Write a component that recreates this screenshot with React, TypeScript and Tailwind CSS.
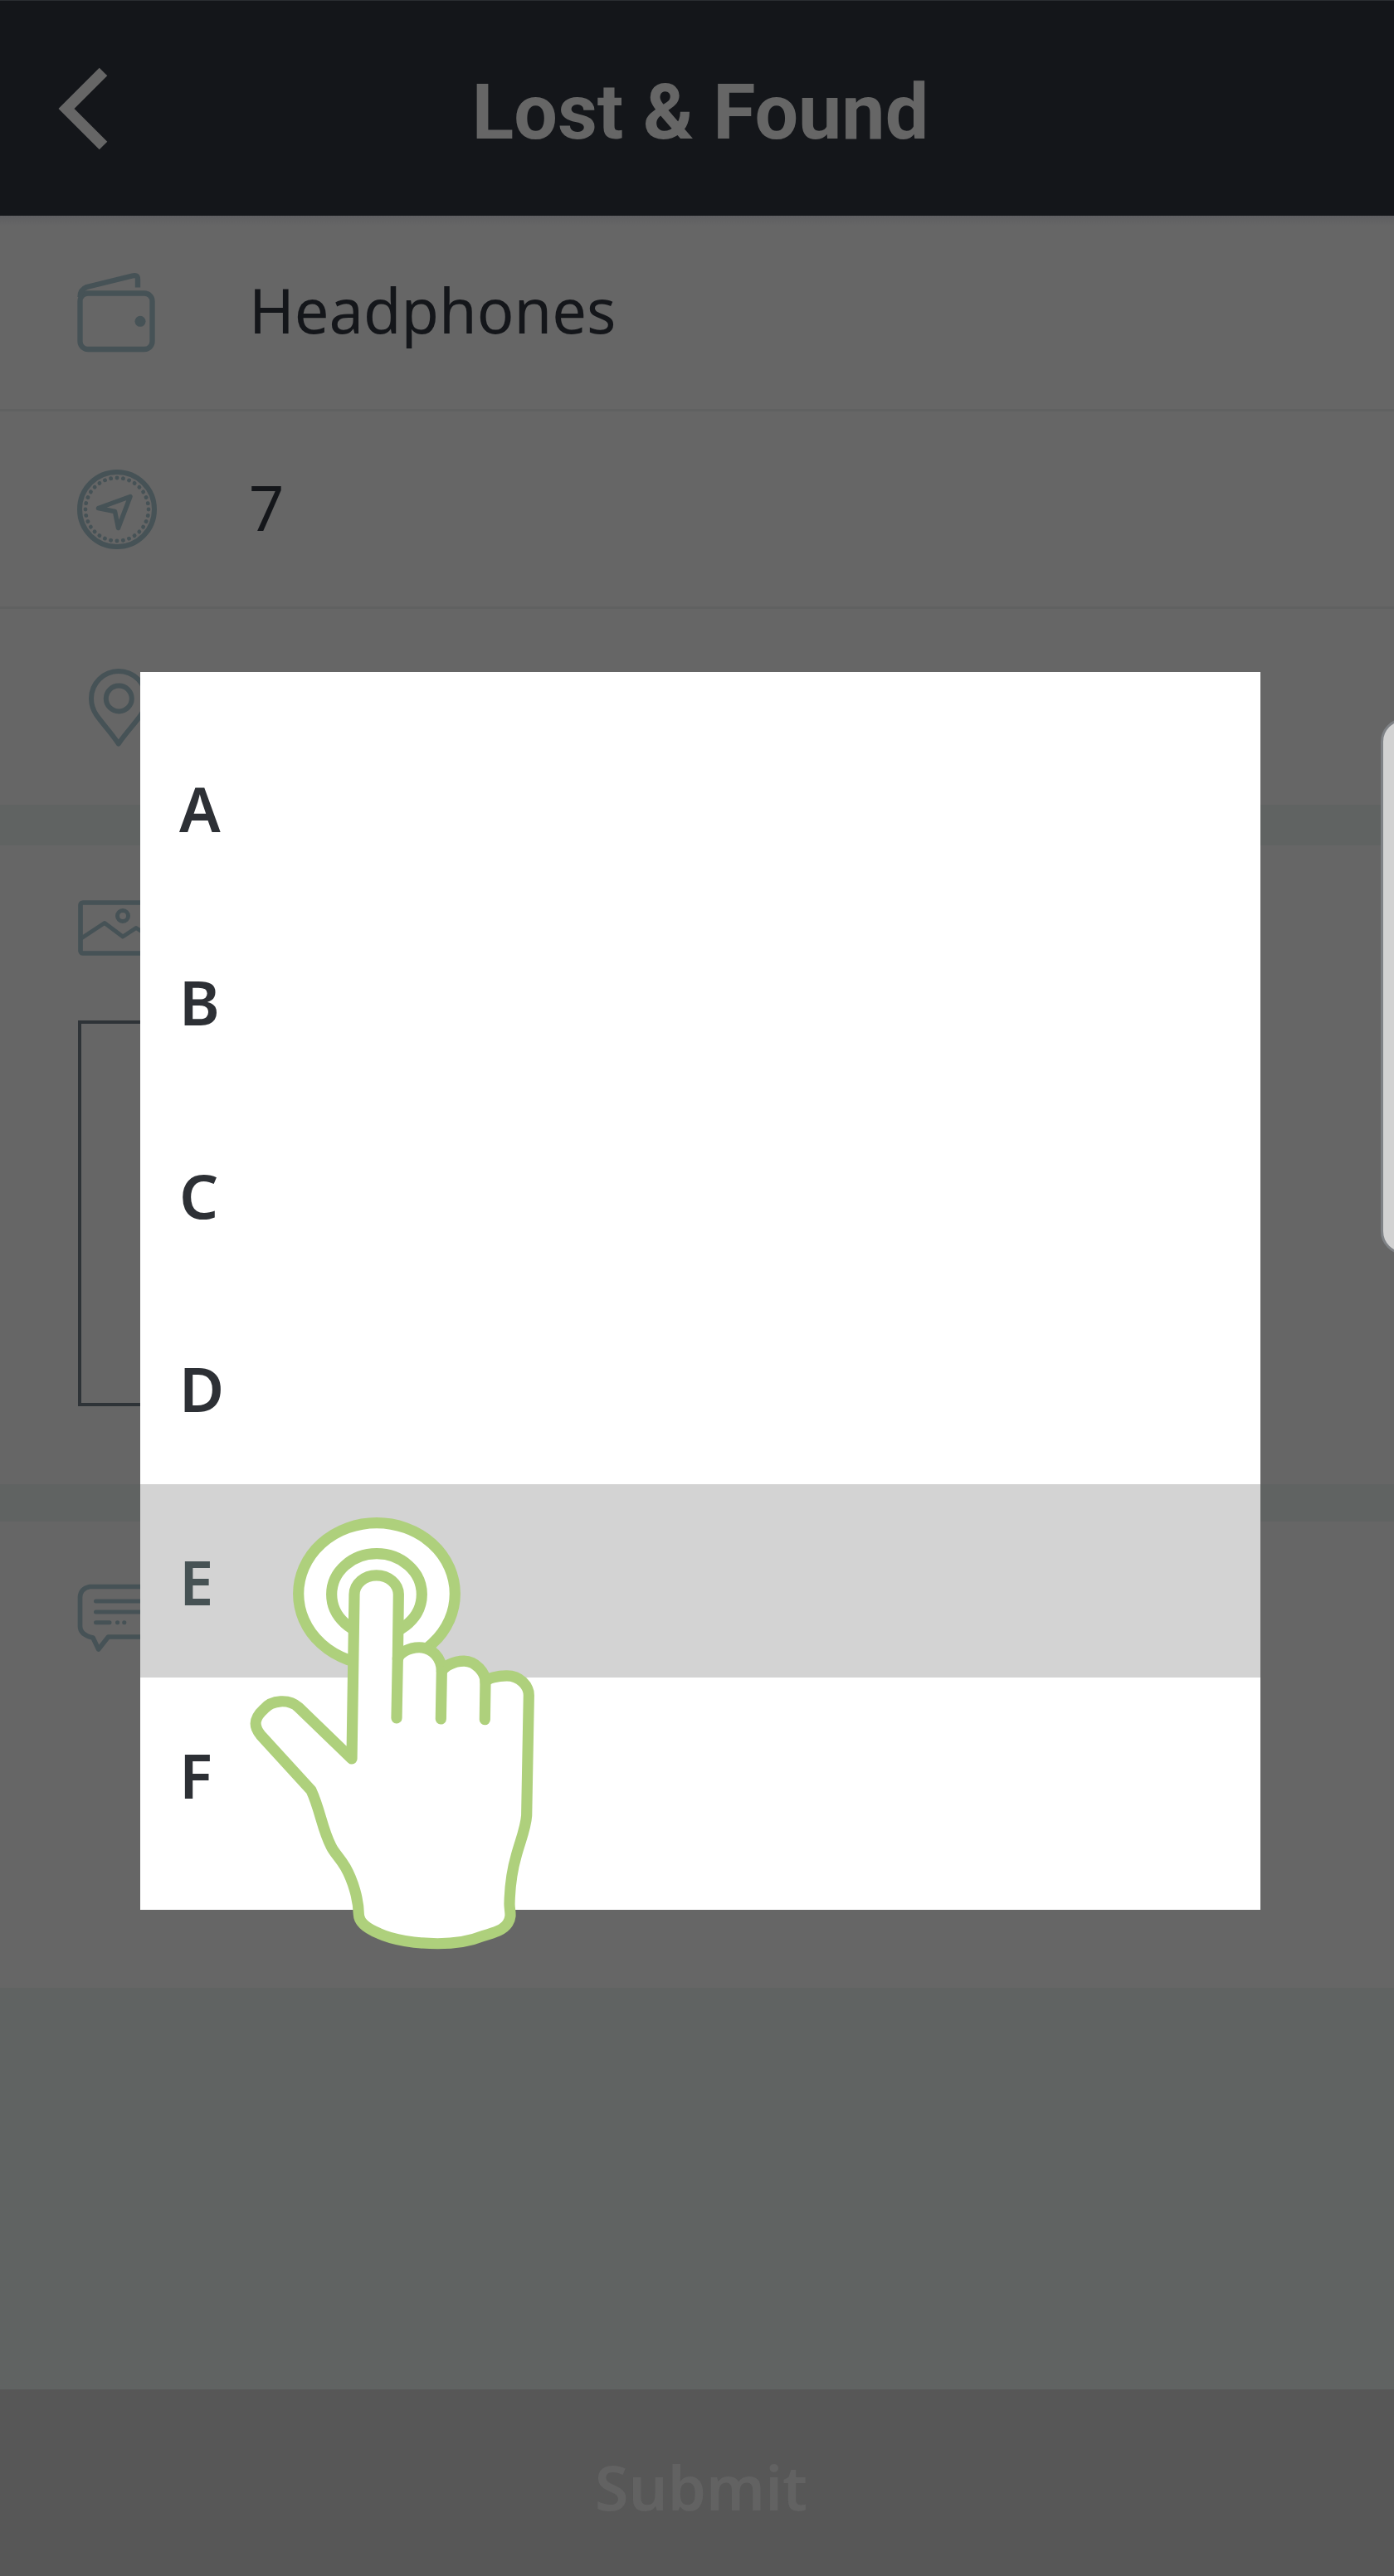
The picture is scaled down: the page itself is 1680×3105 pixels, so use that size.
import React from "react";

const ICON = "#465256";

function WalletIcon() {
  return (
    <svg className="mt-[8px] block h-[120px] w-[120px]" viewBox="80 320 120 120" fill="none" stroke={ICON} strokeWidth="6.300" strokeLinecap="round" strokeLinejoin="round">
      <rect x="96.500" y="353.500" width="87" height="67.500" rx="9.500" />
      <path d="M96.500 358c0-7 3-10 8-12l55-13.500c4-1 6.500 0 6.500 4v10" strokeLinecap="butt" />
      <circle cx="169" cy="387.300" r="6.500" fill={ICON} stroke="none" />
    </svg>
  );
}

function CompassIcon() {
  return (
    <svg className="block h-[120px] w-[120px]" viewBox="80 554 120 120" fill="none" stroke={ICON} strokeWidth="6" strokeLinejoin="round">
      <circle cx="141" cy="614" r="45" />
      <circle cx="141" cy="614" r="38" strokeWidth="4.800" strokeLinecap="round" pathLength="320" strokeDasharray="0.1 9.9" />
      <path d="M118.500 612.500 157 598.500 142.500 636.500 138.500 616.500Z" strokeWidth="5.500" />
    </svg>
  );
}

function PinIcon() {
  return (
    <svg className="mt-[5px] block h-[120px] w-[120px]" viewBox="80 792 120 120" fill="none" stroke={ICON} strokeWidth="6" strokeLinejoin="round">
      <path d="M142.800 894.500C134 881 124 871 116 859.500C111 852 110 847 110 840a33 33 0 0 1 66 0c0 7-1 12-6 19.500C162 871 152 881 142.800 894.500Z" />
      <circle cx="143.300" cy="840" r="15.500" />
    </svg>
  );
}

function ImageIcon() {
  return (
    <svg className="block h-[80px] w-[120px]" viewBox="80 1079 120 80" fill="none" stroke={ICON} strokeWidth="5.700" strokeLinejoin="round">
      <rect x="97" y="1088" width="90" height="61" rx="3" />
      <circle cx="148" cy="1104" r="6.500" strokeWidth="5" />
      <path d="M98 1131 126 1112.500 148 1129 164 1118.500 187 1133" strokeWidth="5" />
    </svg>
  );
}

function ChatIcon() {
  return (
    <svg className="block h-[90px] w-[120px]" viewBox="80 1906 120 90" fill="none" stroke={ICON} strokeWidth="5.700" strokeLinecap="round" strokeLinejoin="round">
      <path d="M108 1912.500H176q12 2 12 12V1962q-2 11-14 11H130.500L118.700 1988 112 1974C103 1972 96.500 1968 96.500 1960V1925Q97 1915 108 1912.500Z" />
      <path d="M115.500 1930H171M115.500 1943H171M115.500 1955.700H132M141.500 1955.700h.1M149.700 1955.700h.1" strokeWidth="5" />
    </svg>
  );
}

function TapHand() {
  return (
    <svg
      className="absolute left-[280px] top-[1800px] h-[570px] w-[400px]"
      viewBox="0 0 1200 1568"
      preserveAspectRatio="none"
      fill="#fff"
      stroke="#aed07c"
      strokeWidth="13.200"
      strokeLinecap="round"
      strokeLinejoin="round"
    >
      <ellipse cx="522" cy="333" rx="283" ry="235" vectorEffect="non-scaling-stroke" />
      <ellipse cx="522" cy="335" rx="163" ry="135" vectorEffect="non-scaling-stroke" />
      <path
        vectorEffect="non-scaling-stroke"
        d="M432 880L441 335C442 300 477 272 521 272C565 272 600 300 601 335L598 550C603 530 637 511 676 511C722 511 757 545 757 590C765 575 798 556 838 556C880 556 915 595 915 625C922 612 960 605 992 605C1040 605 1072 638 1072 670L1064 1068C1061 1110 1042 1150 1027 1200C1008 1260 1003 1310 1002 1362C1002 1385 1012 1402 996 1425C980 1448 950 1456 905 1468C860 1485 800 1493 742 1493C660 1493 580 1480 530 1459C490 1444 458 1425 457 1396C456 1345 436 1284 409 1240C387 1205 370 1195 357 1170C325 1115 318 1050 285 985L102 801C70 765 85 740 115 715C142 685 205 680 240 710Z"
      />
      <path d="M598 545L594 745M757 590L754 748M915 625L913 750" fill="none" vectorEffect="non-scaling-stroke" />
    </svg>
  );
}

function FieldRow({ icon, label }: { icon: React.ReactNode; label?: string }) {
  return (
    <div className="flex h-[238px] items-center border-b-[3px] border-[#606161] pl-[80px]">
      {icon}
      <span className="-mt-[3px] ml-[100px] text-[74px] leading-[100px] text-[#14161a]">{label}</span>
    </div>
  );
}

const options = ["A", "B", "C", "D", "E", "F"];

export default function App() {
  return (
    <div className="relative flex h-[3105px] w-[1680px] flex-col overflow-hidden bg-[#606362] font-['Noto_Sans','Open_Sans',sans-serif]">
      <header className="flex h-[260px] shrink-0 items-center border-t border-[#2a2d31] bg-[#14161a]">
        <svg className="ml-[66px] h-[104px] w-[70px]" viewBox="66 78 70 104" fill="none" stroke="#666" strokeWidth="13.500">
          <path d="M124.500 85.500 80 130 124.500 174.500" />
        </svg>
        <h1 className="w-[1416px] pt-[8px] text-center font-['Roboto',sans-serif] text-[93.3px] font-bold leading-[110px] text-[#666]">Lost &amp; Found</h1>
      </header>

      <section className="h-[710px] shrink-0 bg-[linear-gradient(#5e5e61,#666_12px)]">
        <div className="-mt-[2px]">
          <FieldRow icon={<WalletIcon />} label="Headphones" />
        </div>
        <FieldRow icon={<CompassIcon />} label="7" />
        <div className="flex h-[234px] items-center pl-[80px]">
          <PinIcon />
        </div>
      </section>

      <section className="mt-[49px] h-[770px] shrink-0 bg-[#666] pl-[80px] pt-[60px]">
        <ImageIcon />
        <div className="ml-[14px] mt-[71px] h-[465px] w-[465px] border-4 border-[#2e3337]" />
      </section>

      <section className="mt-[45px] h-[562px] shrink-0 bg-[#666] pl-[80px] pt-[72px]">
        <ChatIcon />
      </section>

      <button className="mt-auto flex h-[225px] shrink-0 items-center justify-center bg-[#575757] pl-[10px] pt-[9px] text-[74px] font-semibold text-[#626262]">
        Submit
      </button>

      <div className="absolute left-[169px] top-[810px] flex h-[1492px] w-[1350px] flex-col bg-white py-[47px]">
        {options.map((o) => (
          <div
            key={o}
            className={
              o === "E"
                ? "flex h-[233px] items-center bg-[#d3d3d3] pl-[47px] pt-[2px] text-[74px] font-semibold text-[#465254]"
                : "flex h-[233px] items-center pl-[47px] pt-[2px] text-[74px] font-semibold text-[#2d3035]"
            }
          >
            {o}
          </div>
        ))}
      </div>

      <div className="absolute left-[1664px] top-[866px] h-[646px] w-[60px] rounded-[28px] border-[3px] border-[#7f8286] bg-[#d2d2d2]" />

      <TapHand />
    </div>
  );
}
